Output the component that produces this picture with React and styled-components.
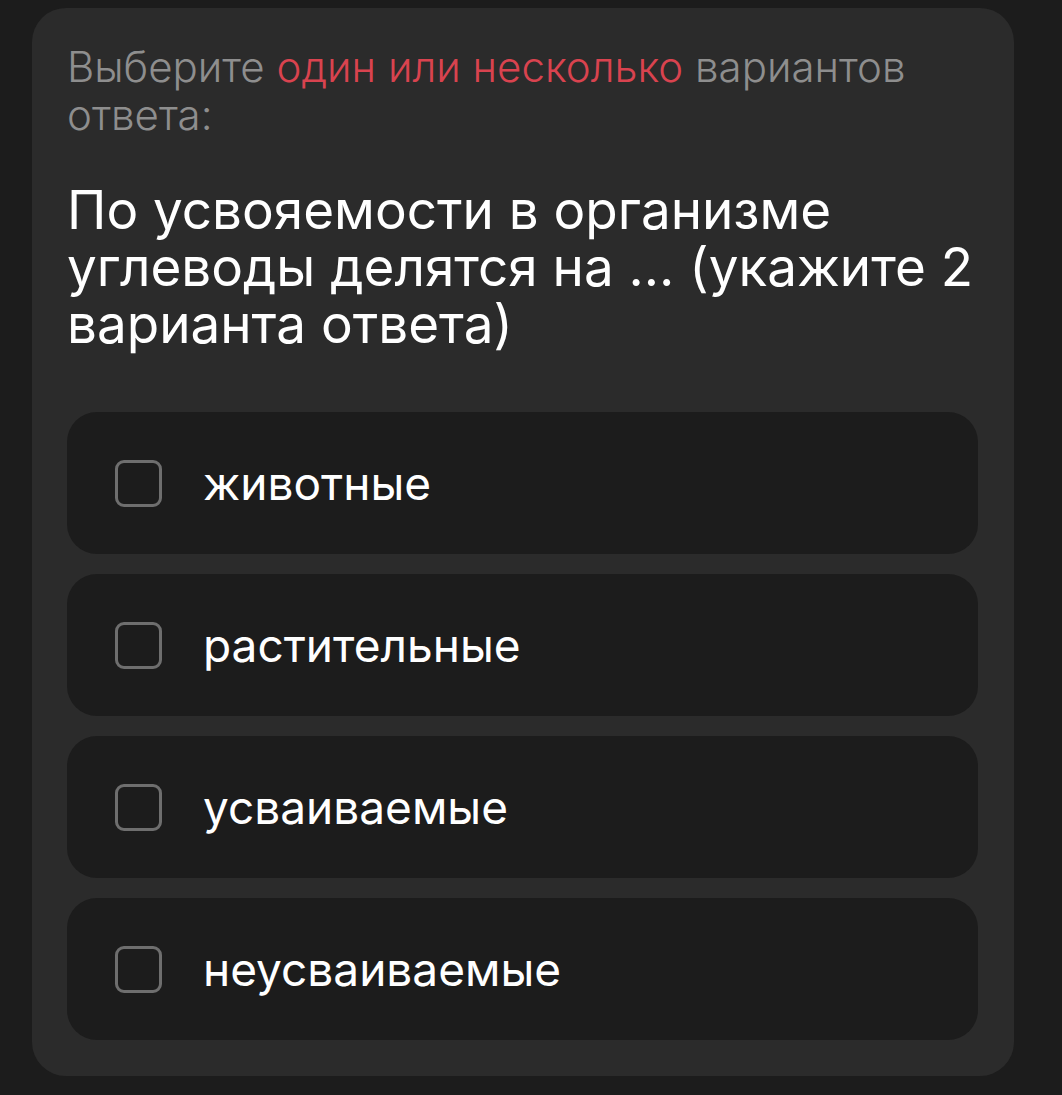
import React from 'react';
import styled, { createGlobalStyle } from 'styled-components';

const GlobalStyle = createGlobalStyle`
  html, body {
    margin: 0;
    padding: 0;
    background: #1c1c1c;
  }
  body {
    font-family: Inter, "Noto Sans", sans-serif;
  }
`;

const Page = styled.div`
  padding: 8px 48px 19px 32px;
`;

const Card = styled.div`
  background: #2b2b2b;
  border-radius: 34px;
  padding: 35px 36px 36px 35px;
  display: flex;
  flex-direction: column;
`;

const Hint = styled.p`
  margin: 0;
  font-size: 42px;
  font-weight: 300;
  line-height: 48px;
  color: #8e8e8e;
`;

const Accent = styled.span`
  color: #d9434f;
`;

const Question = styled.h2`
  margin: 43px 0 59px;
  font-size: 53px;
  font-weight: 400;
  line-height: 57px;
  color: #ffffff;
`;

const Options = styled.div`
  display: flex;
  flex-direction: column;
  gap: 20px;
`;

const Option = styled.label`
  display: flex;
  align-items: center;
  gap: 41px;
  height: 142px;
  padding: 0 48px;
  background: #1c1c1c;
  border-radius: 30px;
  cursor: pointer;
`;

const Box = styled.span`
  flex: 0 0 auto;
  width: 41px;
  height: 41px;
  border: 3px solid #6e6e6e;
  border-radius: 9px;
`;

const Label = styled.span`
  font-size: 46px;
  font-weight: 400;
  color: #ffffff;
`;

const answers = ['животные', 'растительные', 'усваиваемые', 'неусваиваемые'];

export default function App() {
  return (
    <>
      <GlobalStyle />
      <Page>
        <Card>
          <Hint>
            Выберите <Accent>один или несколько</Accent> вариантов ответа:
          </Hint>
          <Question>
            По усвояемости в организме углеводы делятся на … (укажите 2 варианта ответа)
          </Question>
          <Options>
            {answers.map((a) => (
              <Option key={a}>
                <Box />
                <Label>{a}</Label>
              </Option>
            ))}
          </Options>
        </Card>
      </Page>
    </>
  );
}
